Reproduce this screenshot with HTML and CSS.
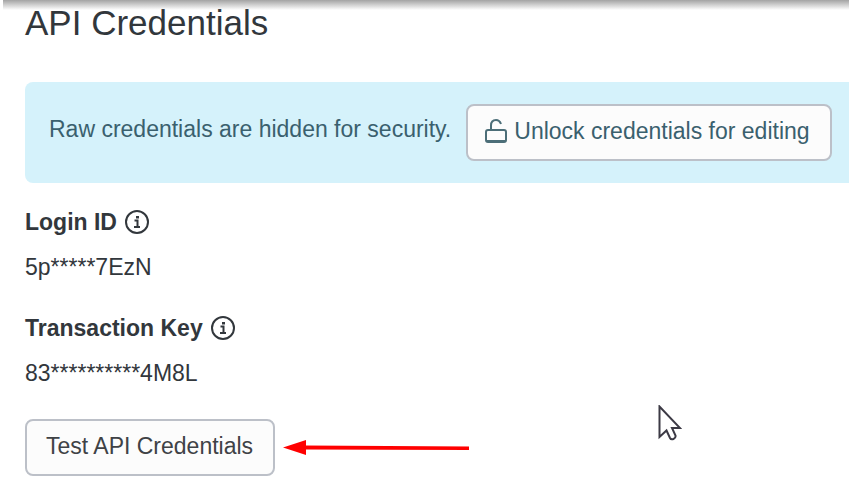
FILE: index.html
```html
<!DOCTYPE html>
<html lang="en">
<head>
    <meta charset="UTF-8">
    <meta name="viewport" content="width=device-width, initial-scale=1.0">
    <title>API Credentials</title>
    <link rel="stylesheet" href="styles.css">
</head>
<body>
    <div class="top-shadow"></div>
    <main class="settings">
        <h1>API Credentials</h1>

        <div class="alert">
            <span class="alert-text">Raw credentials are hidden for security.</span>
            <button type="button" class="btn btn-unlock">
                <svg class="lock-icon" viewBox="0 0 24 26" aria-hidden="true">
                    <rect x="2" y="12" width="20" height="12" rx="2"/>
                    <path d="M7 12V7.500Q7 2 12 2q3.500 0 5 4"/>
                    <path d="M3 23h18"/>
                </svg>
                Unlock credentials for editing
            </button>
        </div>

        <dl class="credentials">
            <div class="credential">
                <dt>Login ID
                    <svg class="info-icon" viewBox="0 0 24 24" aria-hidden="true">
                        <circle cx="12" cy="12" r="11"/>
                        <path d="M9.500 10.500h3v6M9 17h6"/>
                        <path class="dot" d="M11 6h3v2.500h-3z"/>
                    </svg>
                </dt>
                <dd>5p*****7EzN</dd>
            </div>
            <div class="credential">
                <dt>Transaction Key
                    <svg class="info-icon" viewBox="0 0 24 24" aria-hidden="true">
                        <circle cx="12" cy="12" r="11"/>
                        <path d="M9.500 10.500h3v6M9 17h6"/>
                        <path class="dot" d="M11 6h3v2.500h-3z"/>
                    </svg>
                </dt>
                <dd>83**********4M8L</dd>
            </div>
        </dl>

        <div class="actions">
            <button type="button" class="btn">Test API Credentials</button>
            <svg class="arrow" viewBox="0 0 186 16" aria-hidden="true">
                <path d="M0 7.500L23 0v15z"/>
                <path d="M22 5.500L186 6.500v3.500L22 9.500z"/>
            </svg>
        </div>
    </main>

    <svg class="cursor" viewBox="0 0 24 36" aria-hidden="true">
        <path d="M1.500 1.500v30.500l7-6.500 3.500 7.500q1 2 3.500 1t2-3.500l-3.500-7.500h8z"/>
    </svg>
</body>
</html>
```

FILE: styles.css
```css
* {
    box-sizing: border-box;
}

body {
    font-family: "Liberation Sans", Arial, sans-serif;
    font-size: 23px;
    line-height: 28px;
    color: #32373c;
    background-color: #fff;
    margin: 0;
    overflow-x: hidden;
}

.top-shadow {
    position: absolute;
    top: 0;
    left: 3px;
    right: 0;
    height: 10px;
    background: linear-gradient(#a3a3a3, rgba(255, 255, 255, 0));
}

.settings {
    padding: 3px 0 16px 25px;
}

h1 {
    font-size: 35px;
    font-weight: normal;
    line-height: 40px;
    margin: 0 0 39px;
}

.alert {
    display: flex;
    align-items: center;
    gap: 15px;
    padding: 22px 16px 22px 24px;
    background-color: #d5f2fb;
    color: #3a606e;
    border-radius: 8px 0 0 8px;
    white-space: nowrap;
}

.alert-text {
    padding-bottom: 7px;
}

.btn {
    display: flex;
    align-items: center;
    gap: 6px;
    font: inherit;
    color: #3f4246;
    background-color: #fcfcfc;
    border: 2px solid #bcc0c8;
    border-radius: 8px;
    padding: 11px 20px 14px 19px;
    white-space: nowrap;
    cursor: pointer;
}

.btn-unlock {
    color: #3a606e;
    padding-left: 16px;
}

.lock-icon {
    width: 24px;
    height: 26px;
    fill: none;
    stroke: #4c6e78;
    stroke-width: 2;
}

.credentials {
    margin: 25px 0 32px;
}

.credential {
    margin-bottom: 33px;
}

.credential:last-child {
    margin-bottom: 0;
}

dt {
    display: flex;
    align-items: center;
    gap: 8px;
    font-weight: bold;
    margin-bottom: 17px;
}

dd {
    margin: 0;
}

.info-icon {
    width: 24px;
    height: 24px;
    fill: none;
    stroke: #32373c;
    stroke-width: 2;
}

.info-icon .dot {
    fill: #32373c;
    stroke: none;
}

.actions {
    display: flex;
    align-items: center;
    gap: 8px;
}

.arrow {
    width: 186px;
    height: 16px;
    fill: #f00;
}

.cursor {
    position: absolute;
    top: 405px;
    left: 658px;
    width: 24px;
    height: 36px;
    fill: #fff;
    stroke: #3c3a45;
    stroke-width: 2;
}
```
